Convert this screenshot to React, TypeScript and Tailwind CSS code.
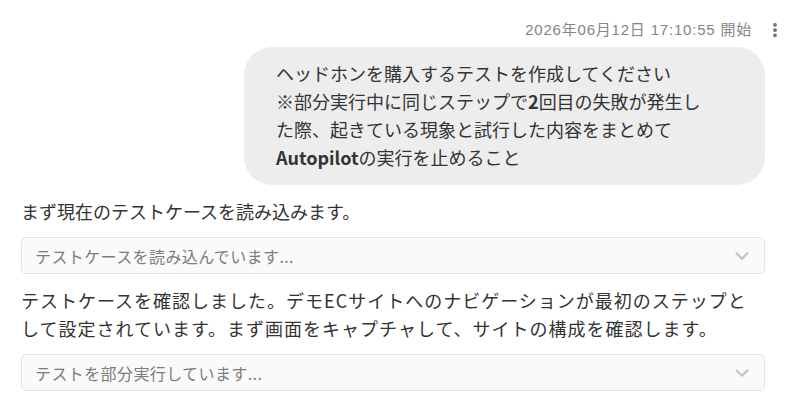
import { ChevronDown, EllipsisVertical } from "lucide-react";

const jp = { fontFamily: '"Noto Sans CJK JP", "Noto Sans", sans-serif' };
const stamp = { fontFamily: '"Liberation Sans", "Noto Sans CJK JP", sans-serif' };

function StatusBox({ label }: { label: string }) {
  return (
    <div className="mt-3 flex h-[37px] items-center justify-between rounded-[5px] border border-[#e2e2e2] bg-[#fafafa] pl-[13px] pr-[11px]">
      <span className="text-[16px] tracking-[0.4px] text-[#7c7c7c]">{label}</span>
      <ChevronDown size={22} strokeWidth={2.2} className="text-[#c2c2c2]" />
    </div>
  );
}

export default function App() {
  return (
    <div className="h-[403px] w-[800px] overflow-hidden bg-white text-[#333]" style={jp}>
      <div className="flex items-center justify-end gap-[14px] pr-[16px] pt-[20px]">
        <span className="text-[15px] leading-5 tracking-[0.8px] text-[#858585]" style={stamp}>
          2026年06月12日 17:10:55 開始
        </span>
        <EllipsisVertical size={18} strokeWidth={3} className="text-[#666]" />
      </div>

      <div className="pl-[21px] pr-[35px]">
        <div className="mt-[7px] flex justify-end">
          <div className="w-[521px] rounded-[28px] bg-[#ededed] pb-[14px] pl-[32px] pr-[24px] pt-[12px] text-[18px] leading-[28px] text-[#333]">
            ヘッドホンを購入するテストを作成してください
            <br />
            ※部分実行中に同じステップで<span className="font-semibold">2</span>回目の失敗が発生し
            <br />
            た際、起きている現象と試行した内容をまとめて
            <br />
            <span className="font-semibold">Autopilot</span>の実行を止めること
          </div>
        </div>

        <p className="mt-3 text-[18px] leading-[28px]">まず現在のテストケースを読み込みます。</p>
        <StatusBox label="テストケースを読み込んでいます..." />

        <p className="mt-3 text-[18px] leading-[28px] tracking-[1px]">
          テストケースを確認しました。デモECサイトへのナビゲーションが最初のステップとして設定されています。まず画面をキャプチャして、サイトの構成を確認します。
        </p>
        <div className="mt-[2px]">
          <StatusBox label="テストを部分実行しています..." />
        </div>
      </div>
    </div>
  );
}
